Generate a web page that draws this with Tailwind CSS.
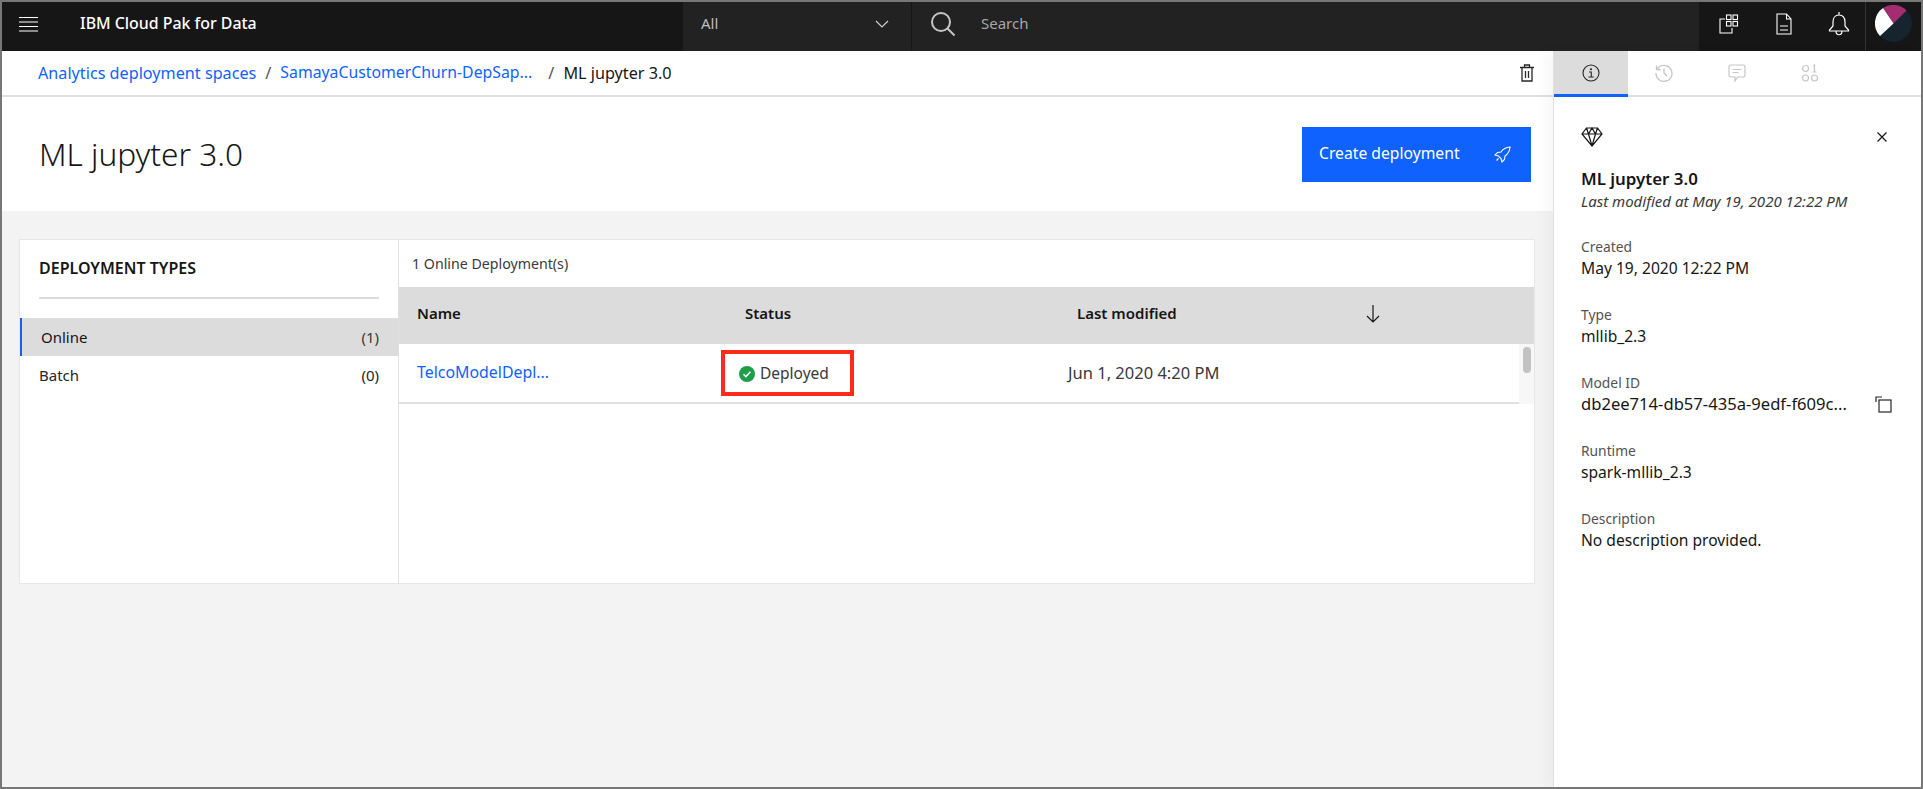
<!DOCTYPE html>
<html lang="en">
<head>
  <meta charset="UTF-8" />
  <title>ML jupyter 3.0</title>
  <script src="https://cdn.jsdelivr.net/npm/@tailwindcss/browser@4"></script>
</head>
<body class="font-['Noto_Sans',sans-serif] text-[#161616]">
  <div class="w-[1923px] h-[789px] overflow-hidden flex flex-col border-2 border-[#777777] bg-white">

    <!-- Top bar -->
    <header class="h-[49px] flex shrink-0 bg-[#222222] text-white">
      <div class="w-[681px] flex items-center pb-[6px] bg-[#161616]">
        <svg class="ml-[17px] w-[19px] h-[16px]" viewBox="0 0 19 16" fill="none" stroke="#fff" stroke-width="1.2"><path d="M0 1.5h19M0 6h19M0 10.500h19M0 15h19" /></svg>
        <span class="ml-[42px] text-[15.900px] font-medium">IBM Cloud Pak for Data</span>
      </div>
      <div class="w-[229px] flex items-center justify-between pb-[6px] pl-[18px] pr-[22px] border-r border-[#161616]">
        <span class="text-[15px] text-[#bdbdbd]">All</span>
        <svg class="w-[14px] h-[8px]" viewBox="0 0 14 8" fill="none" stroke="#cfcfcf" stroke-width="1.2"><path d="M1 1l6 6 6-6" /></svg>
      </div>
      <div class="flex-1 flex items-center pb-[6px] pl-[18px]">
        <svg class="w-[26px] h-[26px]" viewBox="0 0 26 26" fill="none" stroke="#c6c6c6" stroke-width="2"><circle cx="11" cy="11" r="9" /><path d="M17.500 17.500l7 7" /></svg>
        <span class="ml-[25px] text-[15px] text-[#a8a8a8]">Search</span>
      </div>
      <div class="w-[222px] flex items-center bg-[#161616]">
        <svg class="ml-[20px] mb-[6px] w-[20px] h-[20px]" viewBox="0 0 20 20" fill="none" stroke="#fff" stroke-width="1.1"><path d="M6 5H1v14h12v-5" /><rect x="7.500" y="1" width="4.500" height="4.500" /><rect x="14" y="1" width="4.500" height="4.500" /><rect x="7.500" y="7.500" width="4.500" height="4.500" /><rect x="14" y="7.500" width="4.500" height="4.500" /></svg>
        <svg class="ml-[37px] mb-[6px] w-[16px] h-[22px]" viewBox="0 0 16 22" fill="none" stroke="#fff" stroke-width="1.1"><path d="M1 1h9.500L15 6v15H1zM10.500 1v5H15M4 13h8M4 17h8" /></svg>
        <svg class="ml-[36px] mb-[6px] w-[22px] h-[26px]" viewBox="0 0 22 26" fill="none" stroke="#fff" stroke-width="1.2"><path d="M11 1v3M11 4c-4 0-6 3-6 7v4l-3.500 4v1h19v-1L17 15v-4c0-4-2-7-6-7zM8 20c0 5 6 5 6 0" /></svg>
        <div class="ml-[15px] h-full border-l border-[#333333]"></div>
        <svg class="ml-[9px] mb-[6px] w-[37px] h-[37px]" viewBox="0 0 37 37">
          <circle cx="18.500" cy="18.500" r="18.500" fill="#16242e" />
          <path d="M18.500 18.500L8 3A18.500 18.500 0 0 1 31.500 5.500z" fill="#a42c70" />
          <path d="M18.500 18.500L8 3A18.500 18.500 0 0 0 5 31z" fill="#ffffff" />
        </svg>
      </div>
    </header>

    <div class="flex-1 flex min-h-0">
      <!-- Main column -->
      <main class="w-[1551px] flex flex-col">
        <nav class="h-[46px] shrink-0 flex items-center pl-[36px] pr-[19px] border-b-2 border-[#e0e0e0] text-[16.200px]">
          <a class="text-[#0f62fe]">Analytics deployment spaces</a>
          <span class="ml-[9px] text-[#525252]">/</span>
          <a class="ml-[9px] w-[255px] text-[15.800px] text-[#0f62fe] whitespace-nowrap">SamayaCustomerChurn-DepSap...</a>
          <span class="ml-[13px] text-[#525252]">/</span>
          <span class="ml-[9px]">ML jupyter 3.0</span>
          <svg class="ml-auto w-[14px] h-[18px]" viewBox="0 0 14 18" fill="none" stroke="#262626" stroke-width="1.3"><path d="M0 3.500h14M4.500 3.500V1h5v2.500M2 3.500V17h10V3.500M5.500 7v7M8.500 7v7" /></svg>
        </nav>

        <div class="h-[114px] shrink-0 flex items-center justify-between pl-[37px] pr-[22px]">
          <h1 class="text-[31.600px] font-light">ML jupyter 3.0</h1>
          <button class="w-[229px] h-[55px] flex items-center justify-between pl-[17px] pr-[20px] bg-[#0f62fe] text-white text-[15.700px]">
            Create deployment
            <svg class="w-[17px] h-[17px]" viewBox="0 0 17 17" fill="none" stroke="#fff" stroke-width="1.1"><path d="M16 1c-4 .3-7 2-9 5L3.500 6.500 1 9l3.500 1 2.500 2.500 1 3.500 2.500-2.500.5-3.500c3-2 4.700-5 5-9zM4.500 12.500L2.500 14.500" /></svg>
          </button>
        </div>

        <div class="flex-1 bg-[#f3f3f3] pt-[28px] pl-[17px] pr-[18px]">
          <section class="h-[345px] flex bg-white border border-[#e6e6e6]">
            <aside class="w-[379px] shrink-0 border-r border-[#e0e0e0]">
              <h2 class="mt-[18px] ml-[19px] text-[16px] font-semibold h-[20px] leading-[20px]">DEPLOYMENT TYPES</h2>
              <div class="mt-[19px] mx-[19px] h-[2px] bg-[#dcdcdc]"></div>
              <div class="mt-[19px] h-[38px] flex items-center justify-between pl-[19px] pr-[19px] bg-[#dcdcdc] border-l-2 border-[#0f62fe] text-[15px]">
                <span>Online</span><span class="text-[#393939]">(1)</span>
              </div>
              <div class="h-[39px] flex items-center justify-between px-[19px] text-[15px] text-[#262626]">
                <span>Batch</span><span>(0)</span>
              </div>
            </aside>
            <div class="flex-1 flex flex-col">
              <div class="h-[47px] flex items-center pl-[13px] text-[14.200px] text-[#393939]">1 Online Deployment(s)</div>
              <div class="h-[57px] flex items-center pb-[4px] bg-[#dcdcdc] text-[15px] font-semibold">
                <span class="ml-[18px] w-[328px]">Name</span>
                <span class="w-[332px]">Status</span>
                <span class="w-[288px]">Last modified</span>
                <svg class="w-[16px] h-[18px]" viewBox="0 0 16 18" fill="none" stroke="#161616" stroke-width="1.2"><path d="M8 0v17M2 11l6 6 6-6" /></svg>
              </div>
              <div class="flex">
                <div class="flex-1 h-[60px] flex items-center border-b-2 border-[#e0e0e0] text-[15.900px]">
                  <a class="ml-[18px] w-[304px] text-[#0f62fe]">TelcoModelDepl...</a>
                  <div class="w-[133px] h-[46px] flex items-center pl-[14px] pt-[1px] border-4 border-[#ff2a1a] text-[15.500px] text-[#393939]">
                    <svg class="w-[16px] h-[16px] shrink-0" viewBox="0 0 16 16"><circle cx="8" cy="8" r="8" fill="#1e9e4a" /><path d="M4.500 8.200l2.400 2.400 4.500-4.800" fill="none" stroke="#fff" stroke-width="1.500" /></svg>
                    <span class="ml-[5px]">Deployed</span>
                  </div>
                  <span class="ml-[214px] text-[16.500px] text-[#393939] whitespace-nowrap">Jun 1, 2020 4:20 PM</span>
                </div>
                <div class="w-[15px] h-[60px] bg-[#f7f7f7] pt-[3px] pl-[4px]">
                  <div class="w-[8px] h-[26px] rounded-full bg-[#c2c2c2]"></div>
                </div>
              </div>
            </div>
          </section>
        </div>
      </main>

      <!-- Side panel -->
      <aside class="flex-1 flex flex-col border-l border-[#e0e0e0] shadow-[-8px_0_12px_rgba(0,0,0,0.03)]">
        <div class="h-[46px] shrink-0 flex border-b-2 border-[#e0e0e0]">
          <div class="w-[74px] h-[46px] flex items-center justify-center bg-[#dcdcdc] border-b-[3px] border-[#0f62fe]">
            <svg class="w-[18px] h-[18px]" viewBox="0 0 18 18" fill="none" stroke="#262626" stroke-width="1.100"><circle cx="9" cy="9" r="8" /><path d="M7 8h2.300v5M6.500 13h5.200" /><circle cx="9" cy="5.200" r=".5" fill="#262626" /></svg>
          </div>
          <div class="flex items-center">
            <svg class="ml-[27px] w-[18px] h-[18px]" viewBox="0 0 18 18" fill="none" stroke="#c6c6c6" stroke-width="1.300"><path d="M1.500 1.500v4h4M2 5.500A8 8 0 1 1 1 9M9 4.500V9l3 3" /></svg>
            <svg class="ml-[55px] w-[18px] h-[18px]" viewBox="0 0 18 18" fill="none" stroke="#c6c6c6" stroke-width="1.200"><path d="M1 3a2 2 0 0 1 2-2h12a2 2 0 0 1 2 2v8a2 2 0 0 1-2 2H9.500L7 17v-4H3a2 2 0 0 1-2-2zM4.500 5.500h9M4.500 8.500h6" /></svg>
            <svg class="ml-[55px] w-[18px] h-[18px]" viewBox="0 0 18 18" fill="none" stroke="#c6c6c6" stroke-width="1.200"><circle cx="4.500" cy="4.500" r="3" /><circle cx="4.500" cy="14" r="3" /><circle cx="13.500" cy="14" r="3" /><path d="M12 2l1.500-1v7M11.500 8h4" /></svg>
          </div>
        </div>

        <div class="pl-[27px] pr-[34px]">
          <div class="mt-[30px] flex items-center justify-between">
            <svg class="w-[22px] h-[20px]" viewBox="0 0 22 20" fill="none" stroke="#161616" stroke-width="1.200"><path d="M5.500 1h11L21 7 11 19 1 7zM1 7h20M7.500 7L11 19l3.500-12M5.500 1l2 6L11 1l3.500 6 2-6" /></svg>
            <svg class="w-[10px] h-[10px]" viewBox="0 0 10 10" fill="none" stroke="#161616" stroke-width="1.200"><path d="M.5.500l9 9M9.500.500l-9 9" /></svg>
          </div>
          <h3 class="mt-[21px] h-[22px] leading-[22px] text-[16.900px] font-semibold">ML jupyter 3.0</h3>
          <p class="h-[20px] mt-[1px] leading-[20px] text-[15px] italic text-[#393939]">Last modified at May 19, 2020 12:22 PM</p>

          <dl class="mt-[26px] text-[15.600px]">
            <dt class="h-[20px] leading-[20px] text-[13.800px] text-[#525252]">Created</dt>
            <dd class="h-[22px] leading-[22px]">May 19, 2020 12:22 PM</dd>
            <dt class="mt-[26px] h-[20px] leading-[20px] text-[13.800px] text-[#525252]">Type</dt>
            <dd class="h-[22px] leading-[22px]">mllib_2.3</dd>
            <dt class="mt-[26px] h-[20px] leading-[20px] text-[13.800px] text-[#525252]">Model ID</dt>
            <dd class="h-[22px] leading-[22px] flex items-center justify-between">
              <span class="text-[16.600px] whitespace-nowrap">db2ee714-db57-435a-9edf-f609c...</span>
              <svg class="w-[17px] h-[17px] mr-[-5px]" viewBox="0 0 17 17" fill="none" stroke="#262626" stroke-width="1.200"><path d="M1 6V1h6" /><rect x="4" y="4" width="12" height="12" /></svg>
            </dd>
            <dt class="mt-[26px] h-[20px] leading-[20px] text-[13.800px] text-[#525252]">Runtime</dt>
            <dd class="h-[22px] leading-[22px]">spark-mllib_2.3</dd>
            <dt class="mt-[26px] h-[20px] leading-[20px] text-[13.800px] text-[#525252]">Description</dt>
            <dd class="h-[22px] leading-[22px]">No description provided.</dd>
          </dl>
        </div>
      </aside>
    </div>
  </div>
</body>
</html>
